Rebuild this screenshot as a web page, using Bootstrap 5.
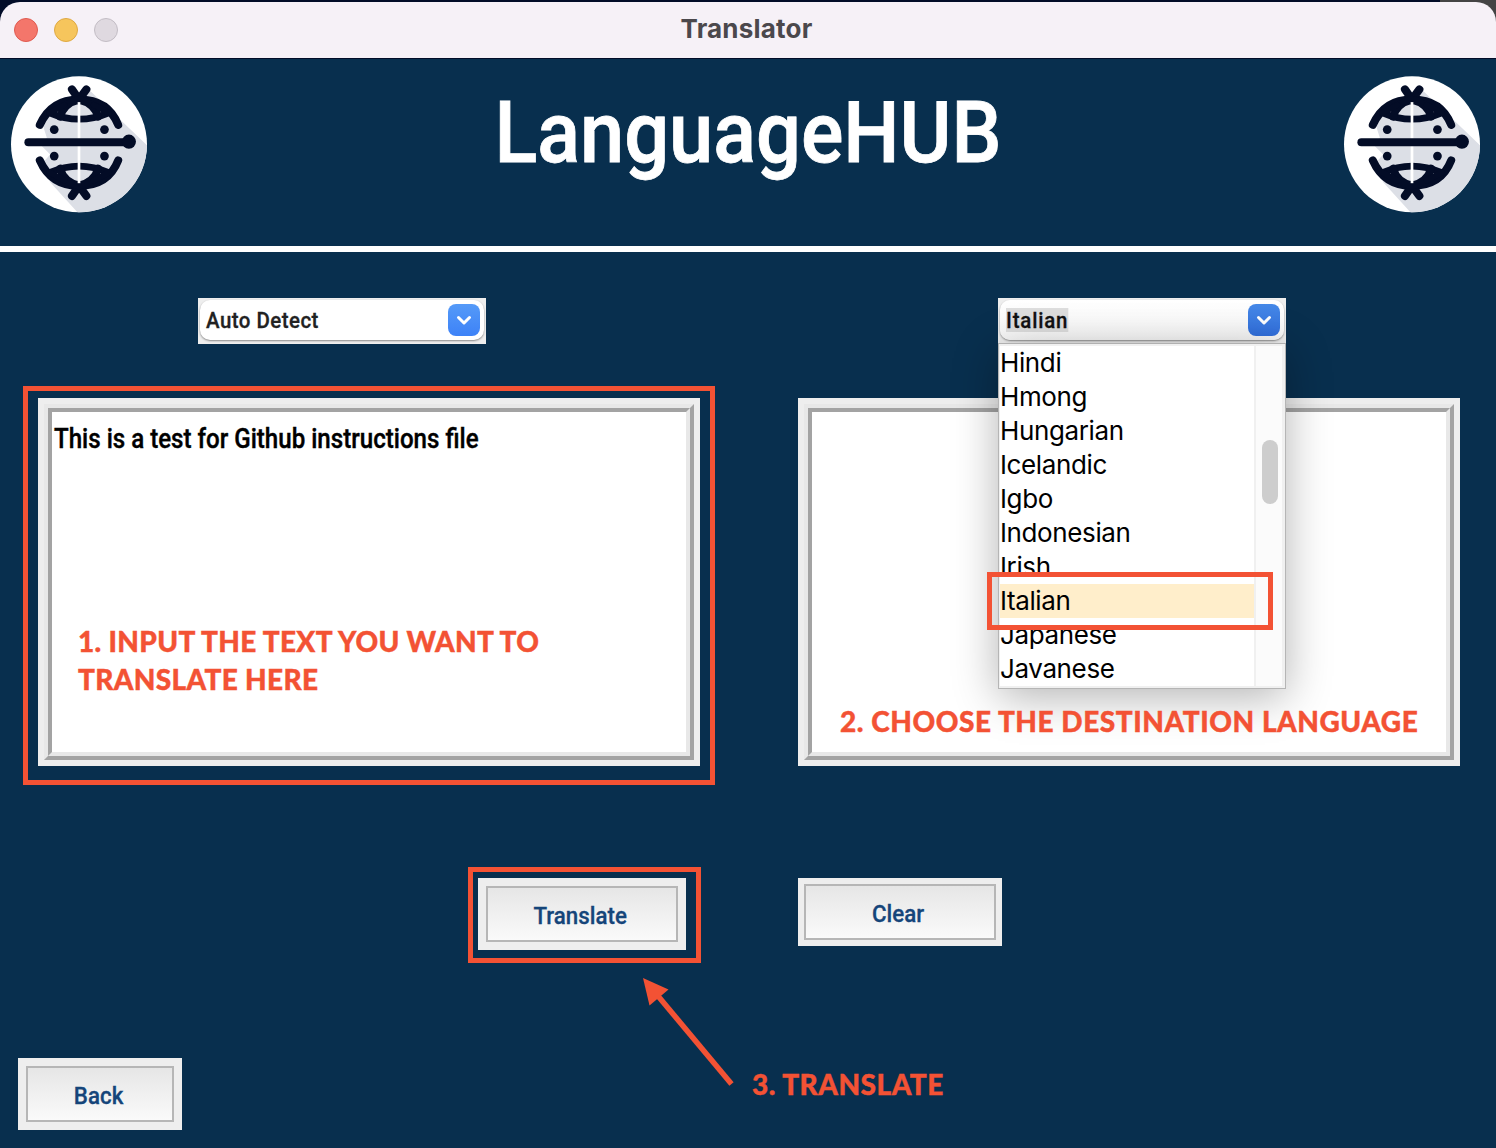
<!DOCTYPE html>
<html lang="en">
<head>
<meta charset="utf-8">
<meta name="viewport" content="width=device-width, initial-scale=1">
<title>Translator</title>
<link href="https://cdn.jsdelivr.net/npm/bootstrap@5.3.0/dist/css/bootstrap.min.css" rel="stylesheet">
<style>
body{background:#020c28;font-family:Roboto,sans-serif;color:#000}
.app-window{width:1496px;height:1148px;padding-top:2px;background:linear-gradient(90deg,#020c28 1440px,#444 1440px)}
.title-strip{height:56px;background:#f6f1f7;border-radius:20px 20px 0 0;padding-left:14px;gap:16px}
.dot{width:24px;height:24px;border-radius:50%;border:1px solid}
.dot-red{background:#f4766b;border-color:#e05a50}
.dot-amber{background:#f6c55c;border-color:#dfa943}
.dot-idle{background:#dfd9e0;border-color:#c3bdc5}
.window-name{font:700 26px/56px Inter,sans-serif;letter-spacing:.2px;color:#4b484c;top:-1px;left:0;right:3px}
.brand-bar{height:188px;border-top:1px solid #020c28;background:#082f4e;padding:16.5px 15.5px 0 10.5px}
.brand-bar svg{width:136px;height:137px}
.brand-name{font-size:86px;font-weight:500;line-height:100px;color:#fff;margin-top:7px;transform:translateX(3px) scaleX(.922);-webkit-text-stroke:.8px #fff}
.work-area{height:902px;border-top:6px solid #fff;background:#082f4e;padding:46px 36px 0 38px}
.pane{width:662px}
.lang-box{width:288px;height:46px;background:#eee;padding:2px;margin-left:160px;margin-bottom:54px}
.pane-out .lang-box{margin-left:200px}
.lang-field{height:40px;border-radius:10px;background:#fff;box-shadow:0 1px 2px #888;padding:0 4px 0 6px;font-weight:500;font-size:22px;letter-spacing:.5px;color:#222}
.lang-field b{font-weight:500;line-height:24px;margin-top:2px;display:inline-block;transform-origin:left;transform:scaleX(.93);-webkit-text-stroke:.3px}
.pane-out .lang-field{background:linear-gradient(#fff,#f7f7f7);color:#111}
.pane-out .lang-field b{background:#dedede;letter-spacing:.9px;margin-top:0;padding-top:1px;line-height:23px}
.chev{width:32px;height:32px;border-radius:8px;background:linear-gradient(#559af8,#3d82f7)}
.pane-out .chev{background:linear-gradient(#4689e8,#316fdd)}
.bevel{height:368px;background:#eee;padding:6px}
.bevel-outer{border:4px solid;border-color:#e8e8e8 #a3a3a3 #a3a3a3 #e8e8e8}
.bevel-inner{border:4px solid;border-color:#a3a3a3 #e8e8e8 #e8e8e8 #a3a3a3;background:#fff;padding:10px 2px}
.typed{font-weight:500;font-size:27px;line-height:34px;white-space:nowrap;transform-origin:left;transform:scaleX(.893);-webkit-text-stroke:.4px}
.push{background:#eee;padding:8px}
.push-face{border:2px solid #b6b6b6;border-radius:0;background:linear-gradient(#e6e6e6,#fafafa);color:#15457a;font-weight:500;font-size:24px;line-height:1;padding:4px 3px 0 0}
.push-face:hover{background:#eee}
.push-face span{display:inline-block;transform:scaleX(.93);-webkit-text-stroke:.3px}
.push-go{width:208px;height:72px;margin-left:440px}
.push-clear{width:204px;height:68px;padding:6px;margin-left:112px}
.push-back{width:164px;height:72px;margin:108px 0 0 -20px}
.picker{top:45px;left:0;width:288px;height:346px;background:#f0f0f0;border:1px solid #b5b5b5;border-top-color:#b0b0b0;padding:2px 3px 2px 1px;box-shadow:0 8px 42px rgba(0,0,0,.3);z-index:5}
.picker-list{width:254px;background:#fff;font:400 26px/34px Inter,sans-serif;letter-spacing:-.38px}
.picker-list li{height:34px}
.picker-list .chosen{background:#ffeecb}
.picker-track{width:26px;margin-left:2px;background:#fbfbfb;padding:94px 4px 0 6px}
.picker-thumb{height:64px;width:16px;border-radius:8px;background:#cdcdcd}
.mark-box{border:5px solid #f35234;z-index:10;pointer-events:none}
.mark-in{left:23px;top:386px;width:692px;height:399px}
.mark-choice{left:987px;top:572px;width:286px;height:58px}
.mark-go{left:468px;top:867px;width:233px;height:96px}
.note{font:900 28px/38px Lato,sans-serif;color:#f35234;z-index:10;white-space:nowrap;-webkit-text-stroke:.4px}
.note-1{left:78px;top:622px;letter-spacing:.33px}
.note-2{left:840px;top:702px;letter-spacing:.55px}
.note-3{left:752px;top:1065px;letter-spacing:.5px}
.pointer-line{left:640px;top:976px;z-index:10}
</style>
<script src="https://cdn.jsdelivr.net/npm/bootstrap@5.3.0/dist/js/bootstrap.bundle.min.js"></script>
</head>
<body>
<svg width="0" height="0" class="position-absolute">
  <defs>
    <clipPath id="disc"><circle cx="236" cy="432" r="203"/></clipPath>
    <symbol id="globe" viewBox="33 228 406 409">
      <circle cx="236" cy="432" r="203" fill="#fff"/>
      <path d="M262 265L450 445V650H245L150 545L125 490L150 462L118 430L140 412L128 375Q160 310 236 298Z" fill="#dcdfe6" clip-path="url(#disc)"/>
      <g id="cap" fill="none" stroke="#030c26" stroke-width="20" stroke-linecap="round">
        <path d="M119 374C145 315 188 298 236 298S330 315 353 374" stroke-width="24"/>
        <path d="M215 268L236 298L258 268" stroke-width="24"/>
        <path d="M148 338Q236 376 325 338"/>
        <path d="M180 350Q190 310 236 299Q282 310 293 350" stroke-width="23"/>
        <path d="M148 338L192 314M325 338L280 314" stroke-width="18"/>
      </g>
      <use href="#cap" transform="matrix(1 0 0 -1 0 854)"/>
      <path d="M236 306V548" stroke="#fff" stroke-width="8"/>
      <path d="M85 426H385" stroke="#030c26" stroke-width="24" stroke-linecap="round"/>
      <g fill="#030c26"><circle cx="385" cy="424" r="21"/><circle cx="162" cy="388" r="13"/><circle cx="312" cy="388" r="13"/><circle cx="162" cy="467" r="13"/><circle cx="312" cy="467" r="13"/></g>
    </symbol>
  </defs>
</svg>
<div class="app-window position-relative overflow-hidden">
  <header class="title-strip position-relative d-flex align-items-center">
    <span class="dot dot-red"></span><span class="dot dot-amber"></span><span class="dot dot-idle"></span>
    <div class="window-name position-absolute text-center">Translator</div>
  </header>
  <div class="brand-bar d-flex justify-content-between align-items-start">
    <svg><use href="#globe"/></svg>
    <h1 class="brand-name mb-0">LanguageHUB</h1>
    <svg><use href="#globe"/></svg>
  </div>
  <main class="work-area">
    <div class="d-flex justify-content-between">
      <section class="pane">
        <div class="lang-box"><div class="lang-field d-flex align-items-center justify-content-between"><b>Auto Detect</b><span class="chev d-flex align-items-center justify-content-center"><svg width="16" height="12" fill="none" stroke="#fff" stroke-width="3" stroke-linecap="round" stroke-linejoin="round"><path d="M2.500 3.500L8 9L13.500 3.500"/></svg></span></div></div>
        <div class="bevel d-flex"><div class="bevel-outer d-flex flex-fill"><div class="bevel-inner flex-fill"><div class="typed">This is a test for Github instructions file</div></div></div></div>
      </section>
      <section class="pane pane-out">
        <div class="lang-box position-relative">
          <div class="lang-field d-flex align-items-center justify-content-between"><b>Italian</b><span class="chev d-flex align-items-center justify-content-center"><svg width="16" height="12" fill="none" stroke="#fff" stroke-width="3" stroke-linecap="round" stroke-linejoin="round"><path d="M2.500 3.500L8 9L13.500 3.500"/></svg></span></div>
          <div class="picker position-absolute d-flex">
            <ul class="picker-list list-unstyled mb-0">
              <li>Hindi</li><li>Hmong</li><li>Hungarian</li><li>Icelandic</li><li>Igbo</li><li>Indonesian</li><li>Irish</li><li class="chosen">Italian</li><li>Japanese</li><li>Javanese</li>
            </ul>
            <div class="picker-track"><div class="picker-thumb"></div></div>
          </div>
        </div>
        <div class="bevel d-flex"><div class="bevel-outer d-flex flex-fill"><div class="bevel-inner flex-fill"></div></div></div>
      </section>
    </div>
    <div class="d-flex align-items-start" style="margin-top:112px">
      <div class="push push-go d-flex"><button class="btn push-face flex-fill"><span>Translate</span></button></div>
      <div class="push push-clear d-flex"><button class="btn push-face flex-fill"><span>Clear</span></button></div>
    </div>
    <div class="push push-back d-flex"><button class="btn push-face flex-fill"><span>Back</span></button></div>
  </main>
  <div class="mark-box mark-in position-absolute"></div>
  <div class="mark-box mark-choice position-absolute"></div>
  <div class="mark-box mark-go position-absolute"></div>
  <div class="note note-1 position-absolute">1. INPUT THE TEXT YOU WANT TO<br>TRANSLATE HERE</div>
  <div class="note note-2 position-absolute">2. CHOOSE THE DESTINATION LANGUAGE</div>
  <div class="note note-3 position-absolute">3. TRANSLATE</div>
  <svg class="pointer-line position-absolute" width="100" height="112"><path d="M18 20L91.500 108" stroke="#f35234" stroke-width="5.500"/><path d="M3 2L28.500 13.500L9.500 29.500Z" fill="#f35234"/></svg>
</div>
</body>
</html>
